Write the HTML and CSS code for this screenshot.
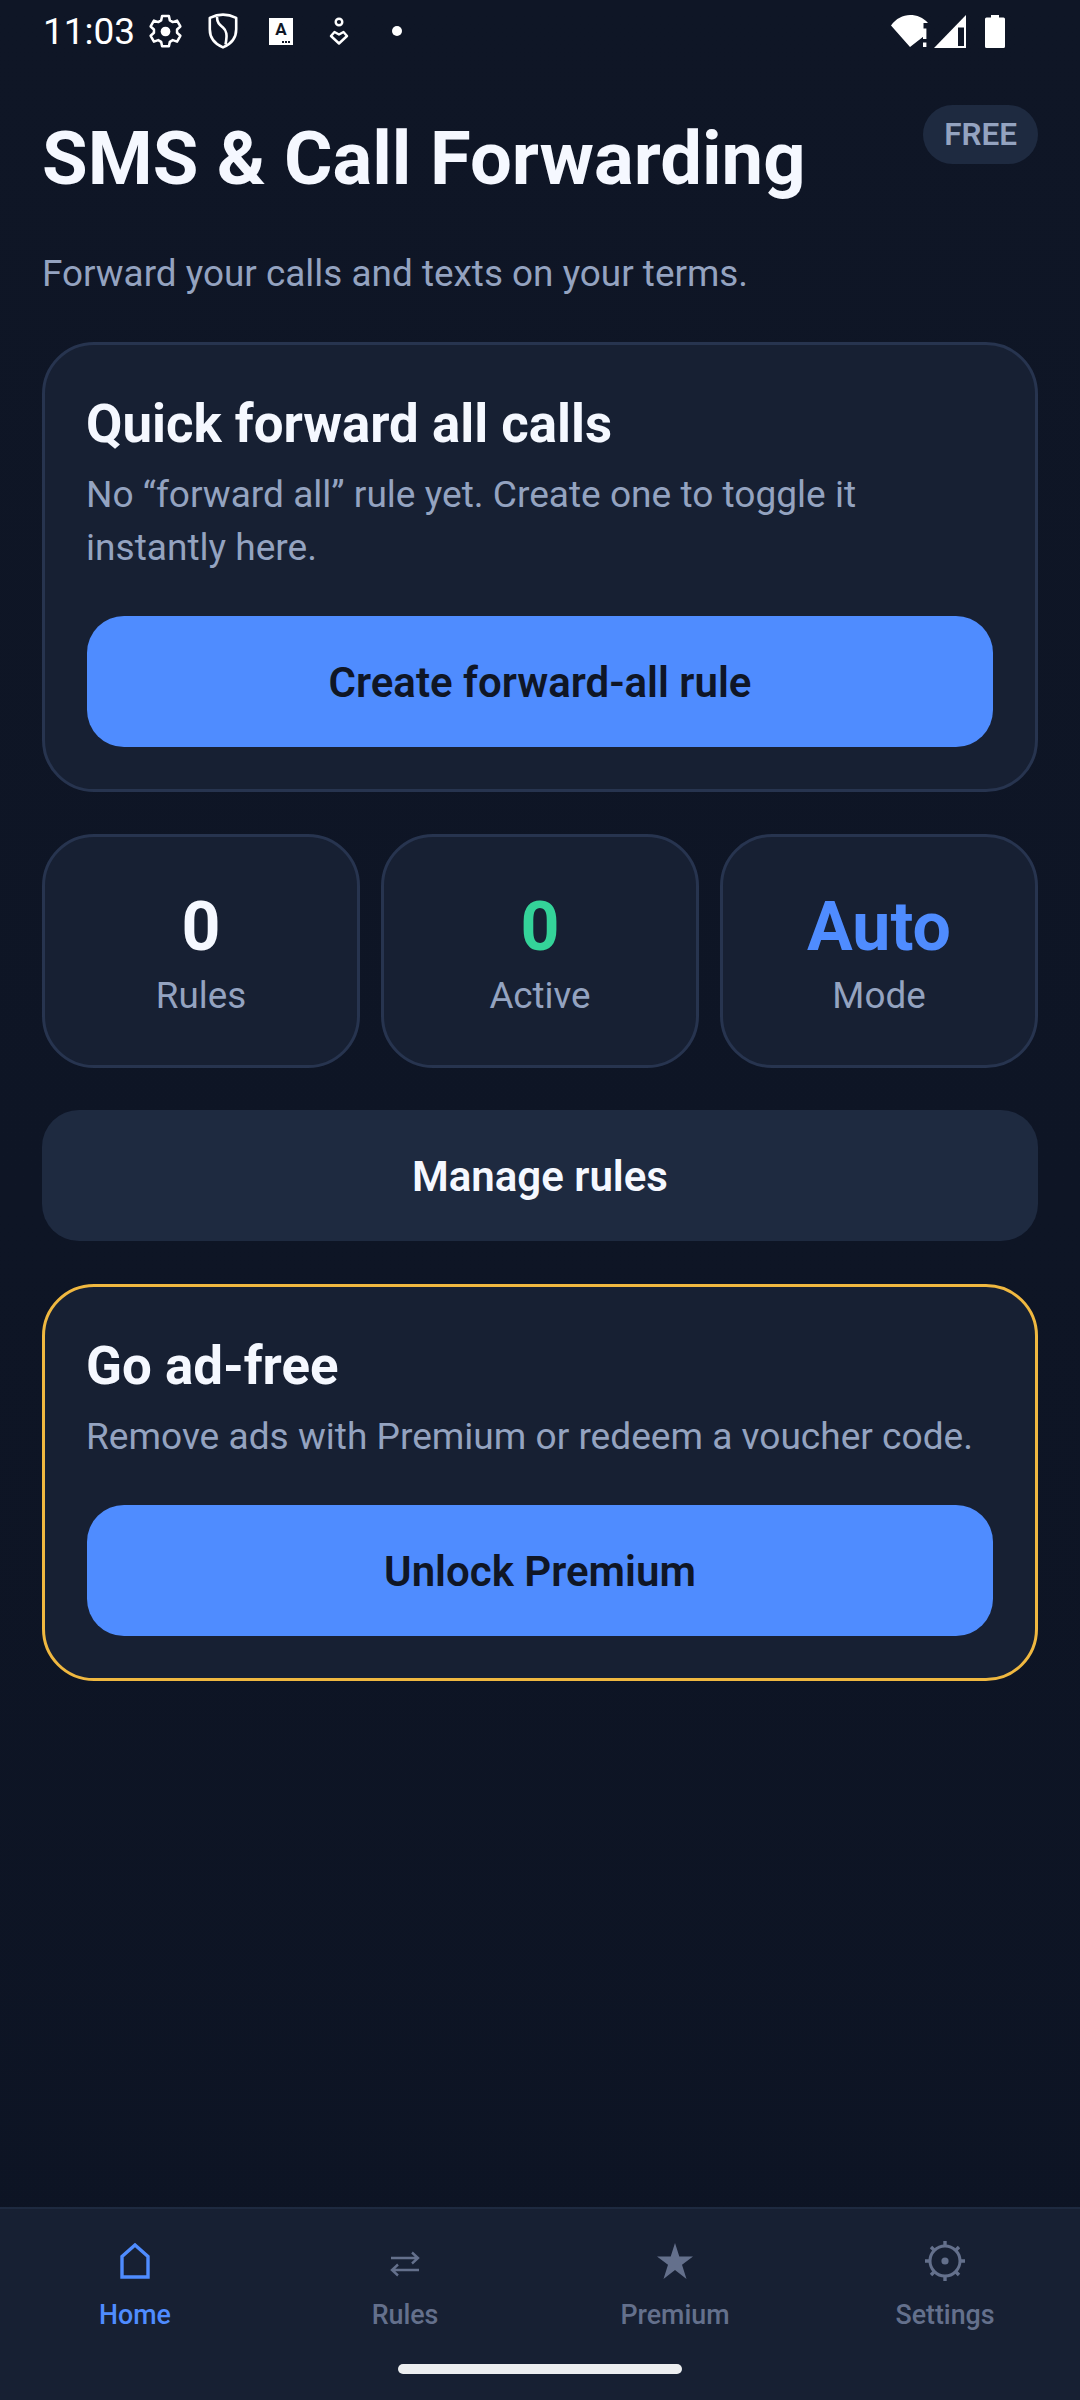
FILE: index.html
```html
<!DOCTYPE html>
<html lang="en">
<head>
    <meta charset="UTF-8">
    <meta name="viewport" content="width=device-width, initial-scale=1.0">
    <title>SMS &amp; Call Forwarding</title>
    <link rel="stylesheet" href="styles.css">
</head>
<body>
    <div class="screen">
        <!-- Android status bar -->
        <div class="status-bar">
            <span class="clock">11:03</span>
            <svg class="ic-gear" width="33" height="35" viewBox="0 0 34 36" fill="none" stroke="#fff" stroke-width="2.6" stroke-linejoin="round">
                <path d="M13.5 2h7l1 4.600 3 1.700 4.400-1.500 3.400 6-3.400 3.100v3.400l3.400 3.100-3.400 6-4.400-1.500-3 1.700-1 4.600h-7l-1-4.600-3-1.700-4.400 1.500-3.400-6 3.400-3.100v-3.400L1.700 12.800l3.400-6 4.400 1.500 3-1.700z"/>
                <circle cx="17" cy="18" r="5" fill="#fff" stroke="none"/>
            </svg>
            <svg class="ic-shield" width="30" height="36" viewBox="0 0 30 36" fill="none" stroke="#fff" stroke-width="2.6" stroke-linejoin="round">
                <path d="M15 1.600c4.400 0 9 1.200 13.200 3.200v11.400c0 8.600-5.600 15-13.200 18.200C7.400 31.200 1.800 24.800 1.800 16.200V4.800C6 2.800 10.600 1.600 15 1.600z"/>
                <path d="M9 4c0 6 3 8 6 10.500 3.500 3 4.500 7 2.500 17"/>
            </svg>
            <span class="ic-keyboard">A<i></i></span>
            <svg class="ic-access" width="20" height="28" viewBox="0 0 20 28" fill="none" stroke="#fff" stroke-width="2.400">
                <circle cx="10" cy="5" r="3.300"/>
                <path d="M10 26.500l-8-7.500 3.500-4 4.500 2.500 4.500-2.500 3.500 4z" stroke-linejoin="round"/>
            </svg>
            <span class="ic-dot"></span>
            <span class="status-right">
                <svg width="38" height="34" viewBox="0 0 38 34">
                    <path d="M0 11.500C5 4.500 12 1 19 1c7 0 13 2.500 18 8h-4.500v13.500L19 33z" fill="#fff"/>
                    <path d="M32 14.500h3.400v10.500H32zM32 28.500h3.400V33H32z" fill="#fff"/>
                </svg>
                <svg class="ic-signal" width="32" height="33" viewBox="0 0 32 33">
                    <path d="M32 0v33H0z" fill="#fff"/>
                    <path d="M24 12.500h6v18.500h-6z" fill="#0f1626"/>
                </svg>
                <svg class="ic-battery" width="20" height="33" viewBox="0 0 20 33">
                    <path d="M6 0h8v2.500h4.500q1.500 0 1.500 1.500v27.500q0 1.500-1.500 1.500h-17Q0 33 0 31.500V4q0-1.500 1.500-1.500H6z" fill="#fff"/>
                </svg>
            </span>
        </div>

        <div class="content">
            <div class="header">
                <h1>SMS &amp; Call Forwarding</h1>
                <span class="badge">FREE</span>
            </div>
            <p class="subtitle">Forward your calls and texts on your terms.</p>

            <div class="card">
                <h2>Quick forward all calls</h2>
                <p>No “forward all” rule yet. Create one to toggle it instantly here.</p>
                <button class="btn-primary">Create forward-all rule</button>
            </div>

            <div class="stats">
                <div class="stat">
                    <span class="stat-value">0</span>
                    <span class="stat-label">Rules</span>
                </div>
                <div class="stat">
                    <span class="stat-value green">0</span>
                    <span class="stat-label">Active</span>
                </div>
                <div class="stat">
                    <span class="stat-value blue">Auto</span>
                    <span class="stat-label">Mode</span>
                </div>
            </div>

            <button class="btn-secondary">Manage rules</button>

            <div class="card card-premium">
                <h2>Go ad-free</h2>
                <p>Remove ads with Premium or redeem a voucher code.</p>
                <button class="btn-primary">Unlock Premium</button>
            </div>
        </div>

        <!-- Bottom tabs -->
        <div class="tabbar">
            <div class="tab active">
                <span class="tab-icon">
                    <svg width="30" height="36" viewBox="0 0 30 36" fill="none" stroke="currentColor" stroke-width="3.400">
                        <path d="M2 34V13.500L15 2l13 11.500V34z"/>
                    </svg>
                </span>
                <span class="tab-label">Home</span>
            </div>
            <div class="tab">
                <span class="tab-icon">
                    <svg class="ic-swap" width="30" height="26" viewBox="0 0 30 26" fill="none" stroke="currentColor" stroke-width="2.400">
                        <path d="M1 7h27M22 1.500L28 7l-6 5.500"/>
                        <path d="M29 19H2M8 13.500L2 19l6 5.500"/>
                    </svg>
                </span>
                <span class="tab-label">Rules</span>
            </div>
            <div class="tab">
                <span class="tab-icon">
                    <svg width="36" height="36" viewBox="0 0 36 36" fill="currentColor">
                        <path d="M18 0l4.300 13.400H36L25 21.800 29.500 36 18 27 6.500 36 11 21.800 0 13.400h13.700z"/>
                    </svg>
                </span>
                <span class="tab-label">Premium</span>
            </div>
            <div class="tab">
                <span class="tab-icon">
                    <svg width="40" height="40" viewBox="0 0 40 40" fill="none" stroke="currentColor" stroke-width="3">
                        <circle cx="20" cy="20" r="15"/>
                        <circle cx="20" cy="20" r="3.600" fill="currentColor" stroke="none"/>
                        <path d="M20 0v5M20 35v5M0 20h5M35 20h5M6 6l3.500 3.500M30.500 30.500L34 34M6 34l3.500-3.500M30.500 9.500L34 6" stroke-width="3.400"/>
                    </svg>
                </span>
                <span class="tab-label">Settings</span>
            </div>
            <span class="home-indicator"></span>
        </div>
    </div>
</body>
</html>
```

FILE: styles.css
```css
body {
    margin: 0;
    padding: 0;
    background: linear-gradient(#0f1626, #0d1424);
    font-family: Roboto, "Liberation Sans", sans-serif;
}

.screen {
    width: 1080px;
    height: 2400px;
    display: flex;
    flex-direction: column;
    overflow: hidden;
}

/* status bar */
.status-bar {
    height: 62px;
    padding-left: 43px;
    display: flex;
    align-items: center;
    color: #fff;
    flex-shrink: 0;
}

.clock {
    font-size: 37px;
    width: 106px;
}

.ic-shield {
    margin-left: 26px;
}

.ic-keyboard {
    margin-left: 31px;
    width: 24px;
    height: 27px;
    background-color: #fff;
    color: #0f1626;
    font-size: 17px;
    font-weight: 700;
    line-height: 22px;
    text-align: center;
    position: relative;
}

.ic-keyboard i {
    position: absolute;
    left: 13px;
    bottom: 2px;
    width: 2px;
    height: 2px;
    background-color: #0f1626;
    box-shadow: 3px 0 #0f1626, 6px 0 #0f1626;
}

.ic-access {
    margin-left: 36px;
}

.ic-dot {
    margin-left: 43px;
    width: 10px;
    height: 10px;
    border-radius: 50%;
    background-color: #fff;
}

.status-right {
    margin-left: auto;
    margin-right: 75px;
    display: flex;
    align-items: center;
}

.ic-signal {
    margin-left: 5px;
}

.ic-battery {
    margin-left: 19px;
}

/* page content */
.content {
    flex: 1;
    padding: 43px 42px 0;
    display: flex;
    flex-direction: column;
}

.header {
    display: flex;
    justify-content: space-between;
    align-items: flex-start;
}

h1 {
    margin: 0;
    padding-top: 11px;
    font-size: 74.2px;
    line-height: 86px;
    font-weight: 700;
    color: #f5f8ff;
}

.badge {
    height: 59px;
    padding: 0 21px;
    border-radius: 30px;
    background-color: #1e2a40;
    color: #94a3c0;
    font-size: 31.5px;
    font-weight: 600;
    line-height: 60px;
}

.subtitle {
    margin: 46px 0 0;
    font-size: 36.9px;
    line-height: 52px;
    color: #94a3c0;
}

.card {
    margin-top: 42px;
    padding: 48px 42px 42px;
    background-color: #172033;
    border: 3px solid #27344f;
    border-radius: 52px;
}

.card h2 {
    margin: 0 0 0 -1px;
    font-size: 52.8px;
    line-height: 62px;
    font-weight: 700;
    color: #f5f8ff;
}

.card p {
    margin: 13px 0 0 -1px;
    font-size: 37.1px;
    line-height: 53px;
    color: #94a3c0;
}

.btn-primary {
    display: block;
    width: 100%;
    height: 131px;
    margin-top: 42px;
    padding-top: 3px;
    border: none;
    border-radius: 37px;
    background-color: #4f8cff;
    color: #0f1626;
    font-family: inherit;
    font-size: 42px;
    font-weight: 600;
}

.stats {
    margin-top: 42px;
    display: flex;
    gap: 21px;
}

.stat {
    flex: 1;
    height: 234px;
    box-sizing: border-box;
    padding-top: 50px;
    background-color: #172033;
    border: 3px solid #27344f;
    border-radius: 52px;
    display: flex;
    flex-direction: column;
    align-items: center;
}

.stat-value {
    font-size: 68px;
    line-height: 80px;
    font-weight: 700;
    color: #f5f8ff;
}

.stat-value.green {
    color: #34d399;
}

.stat-value.blue {
    color: #4f8cff;
}

.stat-label {
    margin-top: 7px;
    font-size: 36.750px;
    line-height: 44px;
    color: #94a3c0;
}

.btn-secondary {
    display: block;
    width: 100%;
    height: 131px;
    margin-top: 42px;
    padding-top: 3px;
    border: none;
    border-radius: 37px;
    background-color: #1e2a40;
    color: #f5f8ff;
    font-family: inherit;
    font-size: 42px;
    font-weight: 600;
}

.card-premium {
    margin-top: 43px;
    border-color: #f0b840;
}

/* bottom tabs */
.tabbar {
    position: relative;
    height: 193px;
    flex-shrink: 0;
    box-sizing: border-box;
    border-top: 2px solid #1e2a40;
    background-color: #172033;
    display: grid;
    grid-template-columns: repeat(4, 1fr);
}

.tab {
    display: flex;
    flex-direction: column;
    align-items: center;
    color: #64708c;
}

.tab.active {
    color: #4f8cff;
}

.tab-icon {
    height: 42px;
    margin-top: 31px;
    display: flex;
    align-items: center;
    justify-content: center;
}

.ic-swap {
    margin-top: 6px;
}

.tab-label {
    margin-top: 17px;
    font-size: 26.8px;
    line-height: 32px;
    font-weight: 500;
}

.home-indicator {
    position: absolute;
    left: 398px;
    bottom: 26px;
    width: 284px;
    height: 10px;
    border-radius: 5px;
    background-color: #eceef0;
}
```
